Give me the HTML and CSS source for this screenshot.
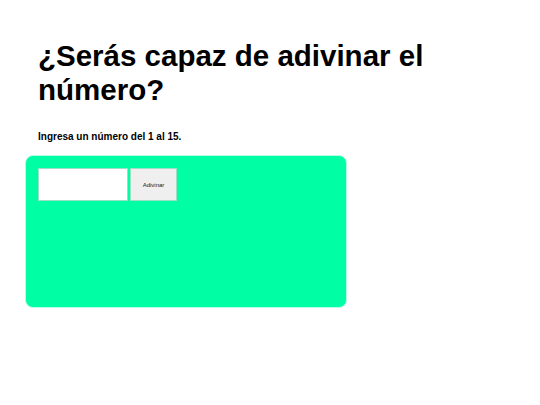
FILE: index.html
```html
<!DOCTYPE html>
<html>
    <head>
        <title>Adivina el número</title>
        <link rel="stylesheet" href="styles.css">
    </head>
    <body>
        <div class="page">
            <h1 class="title">¿Serás capaz de adivinar el número?</h1>
            <p class="hint">Ingresa un número del 1 al 15.</p>
            <div class="game">
                <div class="row">
                    <input type="text" id="guess" class="guess" value=""/>
                    <input type="button" id="check" class="check" value="Adivinar"/>
                </div>
            </div>
        </div>
    </body>
</html>
```
FILE: styles.css
```css
body{margin:0px; padding:0px; font-family:"Liberation Sans", Arial, sans-serif; background:#fff;}
.page{padding:39px 0 0 25px;}
.title{margin:0 0 0 13px; font-size:29.5px; line-height:34px; font-weight:bold; color:#000; width:400px;}
.hint{margin:24px 0 13px 13px; font-size:10px; font-weight:bold;}
.game{width:322px; height:153px; box-sizing:border-box; background:#00ffa4; border-radius:8px; padding:12px; border:1px solid #b8fbe8;}
.row{display:flex; gap:2px;}
.guess{width:90px; height:33px; box-sizing:border-box; border:1px solid #9adfc6; background:#fff; margin:0;}
.check{width:47px; height:33px; box-sizing:border-box; border:1px solid #9adfc6; background:#efefef; font-size:6px; font-family:"Liberation Sans", Arial, sans-serif; color:#222; margin:0; padding:0;}
```
